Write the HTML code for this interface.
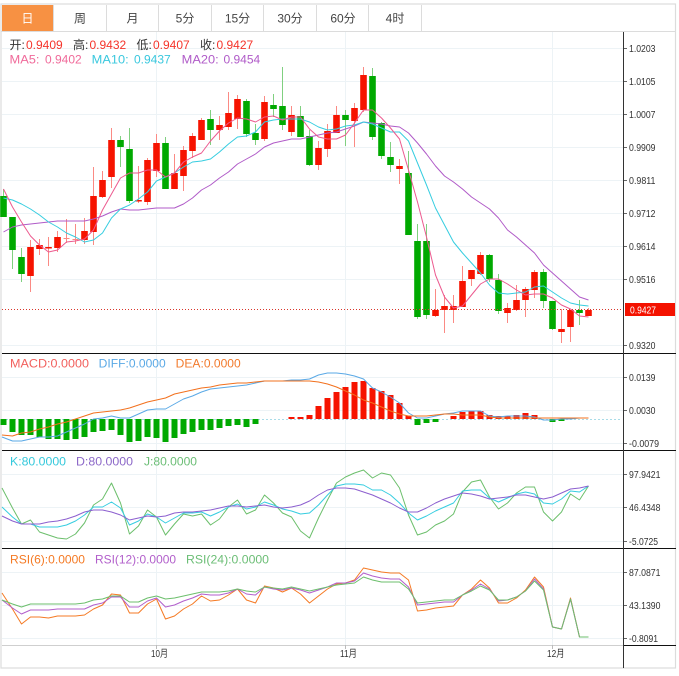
<!DOCTYPE html>
<html><head><meta charset="utf-8"><style>
html,body{margin:0;padding:0;background:#fff;width:679px;height:676px;overflow:hidden}
svg{display:block}
text{font-family:"Liberation Sans","Noto Sans CJK SC",sans-serif}
.l{fill:none;stroke-width:1;stroke-linejoin:round}
.a{font-size:10px;fill:#333}
</style></head><body>
<svg width="679" height="676" viewBox="0 0 679 676" xmlns="http://www.w3.org/2000/svg">
<rect x="1" y="4" width="674.5" height="664" fill="#fff" stroke="#dcdcdc" stroke-width="1.2"/>
<!-- tabs -->
<rect x="2" y="5" width="51" height="26" fill="#f79143"/>
<path d="M1 31.5H676M53.5 5V31M106.5 5V31M158.5 5V31M211.5 5V31M263.5 5V31M316.5 5V31M368.5 5V31M421.5 5V31" stroke="#dcdcdc" fill="none"/>
<g font-size="12" text-anchor="middle" fill="#444">
<text x="27.5" y="22.5" fill="#fff">日</text><text x="80" y="22.5">周</text><text x="132.5" y="22.5">月</text><text x="185" y="22.5">5分</text><text x="237.5" y="22.5">15分</text><text x="290" y="22.5">30分</text><text x="343" y="22.5">60分</text><text x="395" y="22.5">4时</text>
</g>
<!-- grid -->
<path d="M2 48.5H623M2 81.5H623M2 114.5H623M2 147.5H623M2 180.5H623M2 213.5H623M2 246.5H623M2 279.5H623M2 345.5H623M2 377.5H623M2 410.5H623M2 443.5H623M2 474.5H623M2 507.5H623M2 541.5H623M2 572.5H623M2 605.5H623M2 638.5H623M156.5 32V645M345.5 32V645M552.5 32V645" stroke="#edf3f6" fill="none"/>
<!-- wicks red -->
<path fill="none" stroke="#fb8a84" d="M30.5 240V292M39.5 239V255M48.5 237V266M57.5 231V252M66.5 219V243M75.5 224V244M84.5 218V244M93.5 167V245M102.5 171V198M111.5 128V188M138.5 166V203M147.5 158V205M156.5 134V177M174.5 154V189M183.5 146V191M192.5 133V158M201.5 118V140M219.5 116V140M228.5 92V130M237.5 95V129M264.5 96V141M291.5 106V136M318.5 141V170M327.5 124V157M336.5 106V133M354.5 103V147M363.5 67V112M399.5 159V184M435.5 289V317M444.5 295V333M453.5 295V323M462.5 266V307M471.5 270V286M480.5 252V275M507.5 303V323M516.5 285V311M525.5 287V317M534.5 270V298M561.5 309V343M570.5 310V342M588.5 308V316"/>
<!-- wicks green -->
<path fill="none" stroke="#80d080" d="M3.5 189V217M12.5 217V269M21.5 248V282M120.5 136V167M129.5 128V203M165.5 137V189M210.5 110V145M246.5 99V137M255.5 124V145M273.5 94V117M282.5 67V130M300.5 106V137M309.5 130V166M345.5 110V146M372.5 68V140M381.5 122V159M390.5 142V172M408.5 151V235M417.5 224V319M426.5 224V319M489.5 254V282M498.5 274V314M543.5 269V308M552.5 301V330M579.5 300V325"/>
<!-- bodies red -->
<path fill="none" stroke="#f61300" stroke-width="6.6" d="M30.5 247V276M39.5 245V249M48.5 247V248.5M57.5 237V248M84.5 231V240M93.5 196V232M102.5 180V197M111.5 140V177M138.5 200V201.5M147.5 160V202M156.5 143V171M174.5 173V189M183.5 150V176M192.5 136V151M201.5 120V140M219.5 125V130M228.5 113V127M237.5 99V119M264.5 102V139M291.5 115V132M318.5 148V165M327.5 131V149M336.5 115V133M354.5 108V121M363.5 75V110M399.5 166V169M435.5 310V316M444.5 306V310M453.5 306V310M462.5 281V307M471.5 270V279M480.5 255V274M507.5 308V313M516.5 300V310M525.5 289V300M534.5 272V290M561.5 329V332M570.5 310V327M588.5 310V316"/>
<path fill="none" stroke="#fb8a84" stroke-width="6" d="M66.5 238V239M75.5 239V240"/>
<!-- bodies green -->
<path fill="none" stroke="#00a900" stroke-width="6.6" d="M3.5 196V217M12.5 217V250M21.5 257V274M120.5 140V147M129.5 149V201M165.5 143V189M210.5 119V130M246.5 101V134M255.5 133V140M273.5 105V109M282.5 106V125M300.5 116V137M309.5 136V165M345.5 115V120M372.5 76V137M381.5 123V156M390.5 157V165M408.5 173V235M417.5 241V317M426.5 241V315M489.5 255V279M498.5 280V311M543.5 272V301M552.5 301V329M579.5 310V313"/>
<!-- MAs -->
<path class="l" stroke="#b05bc8" d="M3.5 232L12.5 227 21.5 225 30.5 224 39.5 223 48.5 222 57.5 221 66.5 221 75.5 221 84.5 221 93.5 219 102.5 216 111.5 212 120.5 209 129.5 210 138.5 210 147.5 209 156.5 208 165.5 208 174.5 208 183.5 204 192.5 198 201.5 190 210.5 185 219.5 178 228.5 172 237.5 164 246.5 159 255.5 154 264.5 147 273.5 143 282.5 141 291.5 139 300.5 139 309.5 137 318.5 135 327.5 133 336.5 132 345.5 129 354.5 126 363.5 122 372.5 123 381.5 124 390.5 126 399.5 127 408.5 133 417.5 143 426.5 154 435.5 166 444.5 176 453.5 182 462.5 189 471.5 197 480.5 203 489.5 209 498.5 218 507.5 230 516.5 237 525.5 245 534.5 253 543.5 265 552.5 273 561.5 281 570.5 289 579.5 297 588.5 300"/>
<path class="l" stroke="#36cde0" d="M3.5 198L12.5 200 21.5 204 30.5 209 39.5 215 48.5 222 57.5 227 66.5 233 75.5 237 84.5 242 93.5 240 102.5 233 111.5 218 120.5 209 129.5 205 138.5 199 147.5 192 156.5 181 165.5 177 174.5 173 183.5 167 192.5 162 201.5 161 210.5 159 219.5 152 228.5 144 237.5 137 246.5 136 255.5 132 264.5 122 273.5 120 282.5 119 291.5 119 300.5 119 309.5 122 318.5 127 327.5 130 336.5 129 345.5 126 354.5 125 363.5 122 372.5 124 381.5 128 390.5 132 399.5 132 408.5 141 417.5 163 426.5 185 435.5 208 444.5 225 453.5 242 462.5 253 471.5 263 480.5 273 489.5 285 498.5 293 507.5 294 516.5 293 525.5 292 534.5 287 543.5 286 552.5 292 561.5 298 570.5 303 579.5 305 588.5 306"/>
<path class="l" stroke="#ec5a8f" d="M3.5 189L12.5 207 21.5 222 30.5 236 39.5 245 48.5 252 57.5 250 66.5 242 75.5 241 84.5 239 93.5 230 102.5 210 111.5 194 120.5 178 129.5 173 138.5 173 147.5 170 156.5 170 165.5 177 174.5 173 183.5 162 192.5 157 201.5 153 210.5 141 219.5 131 228.5 123 237.5 118 246.5 119 255.5 122 264.5 117 273.5 116 282.5 120 291.5 117 300.5 117 309.5 129 318.5 137 327.5 139 336.5 139 345.5 135 354.5 123 363.5 110 372.5 110 381.5 118 390.5 128 399.5 139 408.5 170 417.5 202 426.5 237 435.5 275 444.5 297 453.5 308 462.5 306 471.5 295 480.5 284 489.5 279 498.5 279 507.5 284 516.5 290 525.5 295 534.5 294 543.5 294 552.5 298 561.5 305 570.5 309 579.5 316 588.5 317"/>
<!-- current price -->
<path d="M2 309.5H623" stroke="#d9362c" stroke-dasharray="1 2" fill="none"/>
<!-- MACD hist -->
<path fill="none" stroke="#a9dce8" stroke-dasharray="2 2" d="M2 419.5H622"/>
<path fill="none" stroke="#00a900" stroke-width="6" d="M3.5 419V425M12.5 419V432M21.5 419V435M30.5 419V435M39.5 419V437M48.5 419V439M57.5 419V439M66.5 419V440M75.5 419V439M84.5 419V437M93.5 419V432M102.5 419V431M111.5 419V430M120.5 419V435M129.5 419V442M138.5 419V441M147.5 419V437M156.5 419V438M165.5 419V442M174.5 419V438M183.5 419V434M192.5 419V432M201.5 419V430M210.5 419V430M219.5 419V428M228.5 419V426M237.5 419V425M246.5 419V427M255.5 419V424M417.5 419V425M426.5 419V423M435.5 419V422M552.5 419V422M561.5 419V421"/>
<path fill="none" stroke="#f61300" stroke-width="6" d="M291.5 419V417M300.5 419V417M309.5 419V415M318.5 419V406M327.5 419V398M336.5 419V392M345.5 419V387M354.5 419V382M363.5 419V381M372.5 419V388M381.5 419V391M390.5 419V395M399.5 419V403M408.5 419V416M453.5 419V416M462.5 419V412M471.5 419V411M480.5 419V411M489.5 419V415M498.5 419V416M507.5 419V416M516.5 419V415M525.5 419V413M534.5 419V415"/>
<path class="l" stroke="#5aa9e6" d="M2 437L12.5 441 21.5 441 30.5 439 39.5 437 48.5 437 57.5 436 66.5 432 75.5 428 84.5 424 93.5 419 102.5 418 111.5 416 120.5 418 129.5 418 138.5 414 147.5 410 156.5 409 165.5 409 174.5 404 183.5 399 192.5 396 201.5 392 210.5 389 219.5 388 228.5 387 237.5 386 246.5 385 255.5 383 264.5 381 273.5 381 282.5 381 291.5 380 300.5 380 309.5 379 318.5 375 327.5 373 336.5 373 345.5 374 354.5 376 363.5 379 372.5 388 381.5 392 390.5 397 399.5 403 408.5 413 417.5 418 426.5 418 435.5 416 444.5 414 453.5 413 462.5 411 471.5 411 480.5 411 489.5 416 498.5 417 507.5 416 516.5 416 525.5 416 534.5 417 543.5 420 552.5 420 561.5 419 570.5 419 579.5 418 588.5 418"/>
<path class="l" stroke="#f2701d" d="M2 435L12.5 436 21.5 433 30.5 432 39.5 429 48.5 427 57.5 424 66.5 422 75.5 419 84.5 416 93.5 413 102.5 412 111.5 411 120.5 410 129.5 408 138.5 405 147.5 402 156.5 400 165.5 398 174.5 394 183.5 392 192.5 390 201.5 388 210.5 387 219.5 385 228.5 384 237.5 383 246.5 383 255.5 382 264.5 381 273.5 381 282.5 381 291.5 381 300.5 381 309.5 381 318.5 382 327.5 384 336.5 387 345.5 391 354.5 395 363.5 400 372.5 403 381.5 407 390.5 411 399.5 414 408.5 416 417.5 416 426.5 416 435.5 415 444.5 414 453.5 414 462.5 415 471.5 415 480.5 415 489.5 417 498.5 418 507.5 418 516.5 418 525.5 418 534.5 418 543.5 418 552.5 418 561.5 418 570.5 418 579.5 418 588.5 418"/>
<!-- KDJ -->
<path class="l" stroke="#6cbf6c" d="M2 488L12.5 508 21.5 524 30.5 520 39.5 532 48.5 535 57.5 538 66.5 539 75.5 534 84.5 523 93.5 505 102.5 499 111.5 483 120.5 503 129.5 534 138.5 526 147.5 510 156.5 517 165.5 535 174.5 524 183.5 514 192.5 516 201.5 514 210.5 525 219.5 519 228.5 507 237.5 500 246.5 514 255.5 510 264.5 495 273.5 503 282.5 513 291.5 517 300.5 531 309.5 538 318.5 518 327.5 500 336.5 483 345.5 477 354.5 473 363.5 470 372.5 478 381.5 473 390.5 475 399.5 488 408.5 515 417.5 535 426.5 532 435.5 525 444.5 521 453.5 514 462.5 492 471.5 482 480.5 480 489.5 497 498.5 509 507.5 503 516.5 493 525.5 487 534.5 487 543.5 512 552.5 521 561.5 512 570.5 494 579.5 500 588.5 486"/>
<path class="l" stroke="#36cde0" d="M2 507L12.5 517 21.5 524 30.5 524 39.5 527 48.5 527 57.5 527 66.5 525 75.5 521 84.5 515 93.5 507 102.5 507 111.5 502 120.5 508 129.5 525 138.5 521 147.5 514 156.5 517 165.5 523 174.5 518 183.5 513 192.5 513 201.5 512 210.5 516 219.5 512 228.5 507 237.5 504 246.5 509 255.5 507 264.5 502 273.5 505 282.5 509 291.5 511 300.5 514 309.5 513 318.5 505 327.5 495 336.5 486 345.5 484 354.5 484 363.5 485 372.5 490 381.5 490 390.5 495 399.5 503 408.5 513 417.5 520 426.5 516 435.5 511 444.5 507 453.5 503 462.5 491 471.5 490 480.5 490 489.5 498 498.5 502 507.5 498 516.5 494 525.5 492 534.5 494 543.5 503 552.5 504 561.5 499 570.5 491 579.5 492 588.5 486"/>
<path class="l" stroke="#8c5fcf" d="M2 516L12.5 521 21.5 524 30.5 524 39.5 524 48.5 522 57.5 521 66.5 519 75.5 516 84.5 512 93.5 510 102.5 510 111.5 512 120.5 515 129.5 520 138.5 518 147.5 516 156.5 517 165.5 516 174.5 513 183.5 512 192.5 512 201.5 511 210.5 510 219.5 508 228.5 506 237.5 506 246.5 507 255.5 506 264.5 505 273.5 507 282.5 508 291.5 507 300.5 505 309.5 501 318.5 495 327.5 490 336.5 488 345.5 488 354.5 489 363.5 492 372.5 495 381.5 499 390.5 503 399.5 508 408.5 512 417.5 512 426.5 508 435.5 503 444.5 499 453.5 496 462.5 493 471.5 494 480.5 496 489.5 499 498.5 498 507.5 497 516.5 495 525.5 495 534.5 497 543.5 499 552.5 497 561.5 493 570.5 489 579.5 488 588.5 486"/>
<!-- RSI -->
<path class="l" stroke="#f57a24" d="M2 593L12.5 609 21.5 624 30.5 617 39.5 617 48.5 618 57.5 616 66.5 616 75.5 616 84.5 615 93.5 609 102.5 605 111.5 594 120.5 595 129.5 613 138.5 613 147.5 604 156.5 599 165.5 619 174.5 616 183.5 609 192.5 604 201.5 596 210.5 601 219.5 600 228.5 595 237.5 589 246.5 600 255.5 603 264.5 586 273.5 588 282.5 592 291.5 588 300.5 594 309.5 603 318.5 596 327.5 589 336.5 584 345.5 583 354.5 580 363.5 568 372.5 570 381.5 572 390.5 573 399.5 573 408.5 580 417.5 611 426.5 610 435.5 608 444.5 607 453.5 606 462.5 595 471.5 589 480.5 580 489.5 588 498.5 603 507.5 603 516.5 598 525.5 590 534.5 577 543.5 587 552.5 627 561.5 629 570.5 598 579.5 637 588.5 637"/>
<path class="l" stroke="#b25fcb" d="M2 600L12.5 608 21.5 614 30.5 610 39.5 610 48.5 610 57.5 609 66.5 609 75.5 609 84.5 609 93.5 605 102.5 603 111.5 597 120.5 597 129.5 607 138.5 607 147.5 601 156.5 598 165.5 607 174.5 605 183.5 601 192.5 598 201.5 594 210.5 595 219.5 595 228.5 593 237.5 589 246.5 594 255.5 595 264.5 587 273.5 589 282.5 590 291.5 588 300.5 590 309.5 593 318.5 590 327.5 587 336.5 583 345.5 583 354.5 581 363.5 573 372.5 576 381.5 578 390.5 579 399.5 579 408.5 587 417.5 605 426.5 604 435.5 603 444.5 602 453.5 602 462.5 595 471.5 590 480.5 584 489.5 589 498.5 601 507.5 600 516.5 597 525.5 591 534.5 579 543.5 589 552.5 627 561.5 629 570.5 599 579.5 637 588.5 637"/>
<path class="l" stroke="#6cbf6c" d="M2 600L12.5 604 21.5 607 30.5 604 39.5 604 48.5 604 57.5 604 66.5 604 75.5 604 84.5 603 93.5 600 102.5 599 111.5 596 120.5 596 129.5 602 138.5 602 147.5 598 156.5 596 165.5 599 174.5 598 183.5 596 192.5 594 201.5 592 210.5 592 219.5 592 228.5 591 237.5 589 246.5 591 255.5 592 264.5 587 273.5 588 282.5 589 291.5 587 300.5 589 309.5 591 318.5 589 327.5 587 336.5 585 345.5 584 354.5 583 363.5 577 372.5 580 381.5 582 390.5 582 399.5 582 408.5 589 417.5 603 426.5 602 435.5 601 444.5 600 453.5 600 462.5 595 471.5 591 480.5 586 489.5 590 498.5 600 507.5 600 516.5 597 525.5 591 534.5 581 543.5 590 552.5 627 561.5 629 570.5 599 579.5 637 588.5 637"/>
<!-- pane lines -->
<path d="M2 353.5H676M2 450.5H676M2 548.5H676M623.5 645.5H676" stroke="#111" fill="none"/>
<path d="M2 645.5H623" stroke="#cfcfcf" fill="none"/>
<path d="M623.5 32V668" stroke="#333" fill="none"/>
<path d="M156.5 645V649M345.5 645V649M552.5 645V649" stroke="#bbb" fill="none"/>
<path d="M624 48.5H627M624 81.5H627M624 114.5H627M624 147.5H627M624 180.5H627M624 213.5H627M624 246.5H627M624 279.5H627M624 345.5H627M624 377.5H627M624 410.5H627M624 443.5H627M624 474.5H627M624 507.5H627M624 541.5H627M624 572.5H627M624 605.5H627M624 638.5H627" stroke="#666" fill="none"/>
<!-- axis labels -->
<g class="a">
<text x="629" y="52" textLength="26.5" lengthAdjust="spacingAndGlyphs">1.0203</text>
<text x="629" y="85" textLength="26.5" lengthAdjust="spacingAndGlyphs">1.0105</text>
<text x="629" y="118" textLength="26.5" lengthAdjust="spacingAndGlyphs">1.0007</text>
<text x="629" y="151" textLength="26.5" lengthAdjust="spacingAndGlyphs">0.9909</text>
<text x="629" y="184" textLength="26.5" lengthAdjust="spacingAndGlyphs">0.9811</text>
<text x="629" y="217" textLength="26.5" lengthAdjust="spacingAndGlyphs">0.9712</text>
<text x="629" y="250" textLength="26.5" lengthAdjust="spacingAndGlyphs">0.9614</text>
<text x="629" y="283" textLength="26.5" lengthAdjust="spacingAndGlyphs">0.9516</text>
<text x="629" y="349" textLength="26.5" lengthAdjust="spacingAndGlyphs">0.9320</text>
<text x="629" y="381" textLength="26.5" lengthAdjust="spacingAndGlyphs">0.0139</text>
<text x="629" y="414" textLength="26.5" lengthAdjust="spacingAndGlyphs">0.0030</text>
<text x="629" y="447" textLength="30" lengthAdjust="spacingAndGlyphs">-0.0079</text>
<text x="629" y="478" textLength="31.5" lengthAdjust="spacingAndGlyphs">97.9421</text>
<text x="629" y="511" textLength="31.5" lengthAdjust="spacingAndGlyphs">46.4348</text>
<text x="629" y="545" textLength="29" lengthAdjust="spacingAndGlyphs">-5.0725</text>
<text x="629" y="576" textLength="31.5" lengthAdjust="spacingAndGlyphs">87.0871</text>
<text x="629" y="609" textLength="31.5" lengthAdjust="spacingAndGlyphs">43.1390</text>
<text x="629" y="642" textLength="29" lengthAdjust="spacingAndGlyphs">-0.8091</text>
<text x="151" y="657" textLength="17" lengthAdjust="spacingAndGlyphs">10月</text>
<text x="340" y="657" textLength="17" lengthAdjust="spacingAndGlyphs">11月</text>
<text x="547" y="657" textLength="17.5" lengthAdjust="spacingAndGlyphs">12月</text>
</g>
<rect x="625" y="303" width="50" height="13" fill="#f41200"/>
<text x="630" y="313.5" font-size="10" fill="#fff" textLength="26" lengthAdjust="spacingAndGlyphs">0.9427</text>
<!-- info -->
<g font-size="12">
<text x="9.5" y="49" fill="#333">开:</text><text x="26" y="49" fill="#f5342a">0.9409</text>
<text x="73" y="49" fill="#333">高:</text><text x="89.5" y="49" fill="#f5342a">0.9432</text>
<text x="136.5" y="49" fill="#333">低:</text><text x="153" y="49" fill="#f5342a">0.9407</text>
<text x="200" y="49" fill="#333">收:</text><text x="216.5" y="49" fill="#f5342a">0.9427</text>
<text x="9.5" y="63.5" fill="#f06a9a" textLength="30" lengthAdjust="spacingAndGlyphs">MA5:</text><text x="45" y="63.5" fill="#f06a9a">0.9402</text>
<text x="91.7" y="63.5" fill="#3ac8de" textLength="37" lengthAdjust="spacingAndGlyphs">MA10:</text><text x="134" y="63.5" fill="#3ac8de">0.9437</text>
<text x="181.7" y="63.5" fill="#b05bc8" textLength="37" lengthAdjust="spacingAndGlyphs">MA20:</text><text x="223.5" y="63.5" fill="#b05bc8">0.9454</text>
<text x="10" y="367.5" fill="#f2605d" textLength="79" lengthAdjust="spacingAndGlyphs">MACD:0.0000</text>
<text x="98.7" y="367.5" fill="#5aa9e6" textLength="67" lengthAdjust="spacingAndGlyphs">DIFF:0.0000</text>
<text x="175.7" y="367.5" fill="#f27a2c" textLength="65" lengthAdjust="spacingAndGlyphs">DEA:0.0000</text>
<text x="10" y="465.5" fill="#35c9dc" textLength="56" lengthAdjust="spacingAndGlyphs">K:80.0000</text>
<text x="76" y="465.5" fill="#8c68c8" textLength="57" lengthAdjust="spacingAndGlyphs">D:80.0000</text>
<text x="144" y="465.5" fill="#6cbe76" textLength="53" lengthAdjust="spacingAndGlyphs">J:80.0000</text>
<text x="10" y="563.5" fill="#f57a24" textLength="75" lengthAdjust="spacingAndGlyphs">RSI(6):0.0000</text>
<text x="95" y="563.5" fill="#b25fcb" textLength="81" lengthAdjust="spacingAndGlyphs">RSI(12):0.0000</text>
<text x="186" y="563.5" fill="#6cbe76" textLength="83" lengthAdjust="spacingAndGlyphs">RSI(24):0.0000</text>
</g>
</svg>
</body></html>
